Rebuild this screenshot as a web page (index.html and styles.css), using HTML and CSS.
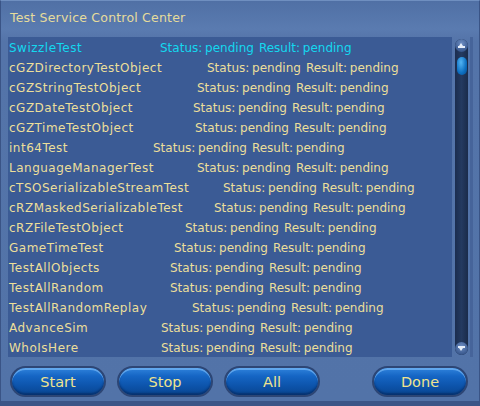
FILE: index.html
```html
<!DOCTYPE html>
<html>
<head>
<meta charset="utf-8">
<link rel="stylesheet" href="styles.css">
</head>
<body>
<div class="window">
  <div class="title">Test Service Control Center</div>
  <div class="content">
    <div class="list">
      <div class="row sel"><span class="name" style="width:151px">SwizzleTest</span><span class="st">Status: pending</span><span class="rs">Result: pending</span></div>
      <div class="row"><span class="name" style="width:198px">cGZDirectoryTestObject</span><span class="st">Status: pending</span><span class="rs">Result: pending</span></div>
      <div class="row"><span class="name" style="width:188px">cGZStringTestObject</span><span class="st">Status: pending</span><span class="rs">Result: pending</span></div>
      <div class="row"><span class="name" style="width:184px">cGZDateTestObject</span><span class="st">Status: pending</span><span class="rs">Result: pending</span></div>
      <div class="row"><span class="name" style="width:186px">cGZTimeTestObject</span><span class="st">Status: pending</span><span class="rs">Result: pending</span></div>
      <div class="row"><span class="name" style="width:144px">int64Test</span><span class="st">Status: pending</span><span class="rs">Result: pending</span></div>
      <div class="row"><span class="name" style="width:188px">LanguageManagerTest</span><span class="st">Status: pending</span><span class="rs">Result: pending</span></div>
      <div class="row"><span class="name" style="width:214px">cTSOSerializableStreamTest</span><span class="st">Status: pending</span><span class="rs">Result: pending</span></div>
      <div class="row"><span class="name" style="width:205px">cRZMaskedSerializableTest</span><span class="st">Status: pending</span><span class="rs">Result: pending</span></div>
      <div class="row"><span class="name" style="width:176px">cRZFileTestObject</span><span class="st">Status: pending</span><span class="rs">Result: pending</span></div>
      <div class="row"><span class="name" style="width:165px">GameTimeTest</span><span class="st">Status: pending</span><span class="rs">Result: pending</span></div>
      <div class="row"><span class="name" style="width:161px">TestAllObjects</span><span class="st">Status: pending</span><span class="rs">Result: pending</span></div>
      <div class="row"><span class="name" style="width:161px">TestAllRandom</span><span class="st">Status: pending</span><span class="rs">Result: pending</span></div>
      <div class="row"><span class="name" style="width:183px">TestAllRandomReplay</span><span class="st">Status: pending</span><span class="rs">Result: pending</span></div>
      <div class="row"><span class="name" style="width:152px">AdvanceSim</span><span class="st">Status: pending</span><span class="rs">Result: pending</span></div>
      <div class="row"><span class="name" style="width:152px">WhoIsHere</span><span class="st">Status: pending</span><span class="rs">Result: pending</span></div>
    </div>
    <div class="scroll">
      <div class="arrow up"><span></span></div>
      <div class="thumb"></div>
      <div class="spacer"></div>
      <div class="arrow down"><span></span></div>
    </div>
    <div class="edge"></div>
  </div>
  <div class="buttons">
    <div class="btn">Start</div>
    <div class="btn">Stop</div>
    <div class="btn">All</div>
    <div class="gapfill"></div>
    <div class="btn">Done</div>
  </div>
</div>
</body>
</html>
```

FILE: styles.css
```css
html, body {
  margin: 0;
  padding: 0;
  background: #2a3f66;
}
.window {
  width: 480px;
  height: 406px;
  box-sizing: border-box;
  background: linear-gradient(#5070a5 0px, #5a7bb0 28px, #5474a9 40px, #5273a8 100%);
  border: 1px solid #3a5486;
  border-top-color: #6f8fc0;
  border-bottom: 5px solid #3b5587;
  display: flex;
  flex-direction: column;
  font-family: "Comic Sans MS", "DejaVu Sans", sans-serif;
  color: #ecdf9a;
}
.title {
  height: 36px;
  padding-left: 9px;
  font-size: 12.5px;
  letter-spacing: 0.2px;
  line-height: 34px;
  color: #e6dc9c;
}
.content {
  display: flex;
  height: 320px;
  padding-left: 7px;
}
.list {
  width: 444px;
  background: #3b5b95;
  padding-top: 1px;
  box-sizing: border-box;
  overflow: hidden;
}
.row {
  display: flex;
  height: 20px;
  line-height: 20px;
  padding-left: 1px;
  font-size: 12px;
  white-space: nowrap;
}
.row .name {
  flex: none;
  letter-spacing: 0.5px;
}
.row .st, .row .rs {
  word-spacing: -1px;
}
.row .st {
  margin-right: 5px;
}
.row.sel {
  color: #14d8ef;
}
.scroll {
  margin-left: 3px;
  margin-top: 2px;
  width: 13px;
  height: 316px;
  border-radius: 7px;
  background: linear-gradient(90deg, #1b2d4f, #243a60 50%, #1a2b4a);
  display: flex;
  flex-direction: column;
  align-items: center;
}
.arrow {
  width: 13px;
  height: 13px;
  border-radius: 50%;
  background: radial-gradient(circle at 50% 35%, #6f8fc4, #3b5a8f 70%, #2a4372);
  position: relative;
}
.arrow span {
  position: absolute;
  left: 3px;
  width: 7px;
  height: 2px;
  background: #e6eefa;
  top: 7px;
}
.arrow span::before {
  content: "";
  position: absolute;
  left: 1px;
  top: -3px;
  border-left: 2.5px solid transparent;
  border-right: 2.5px solid transparent;
  border-bottom: 3px solid #e6eefa;
}
.arrow.down span {
  top: 4px;
}
.arrow.down span::before {
  top: 2px;
  border-bottom: none;
  border-top: 3px solid #e6eefa;
}
.thumb {
  margin-top: 5px;
  width: 10px;
  height: 18px;
  border-radius: 5px;
  background: radial-gradient(ellipse at 40% 30%, #52b4f4, #0d6fc0 60%, #07488a);
}
.spacer {
  flex: 1;
}
.edge {
  margin-left: 2px;
  width: 3px;
  height: 320px;
  background: #46649a;
}
.buttons {
  display: flex;
  padding: 9px 0 0 9px;
  gap: 11px;
}
.gapfill {
  width: 30px;
}
.btn {
  width: 96px;
  height: 31px;
  box-sizing: border-box;
  border-radius: 16px;
  border: 2px solid #2d4675;
  background: linear-gradient(#2f83dc 0%, #1565c4 30%, #0c52a8 70%, #0a4690 100%);
  box-shadow: inset 0 2px 0 rgba(140, 200, 255, 0.55), inset 0 -2px 2px rgba(0, 20, 60, 0.4);
  color: #efe48f;
  font-size: 14.5px;
  line-height: 29px;
  text-align: center;
}
```
